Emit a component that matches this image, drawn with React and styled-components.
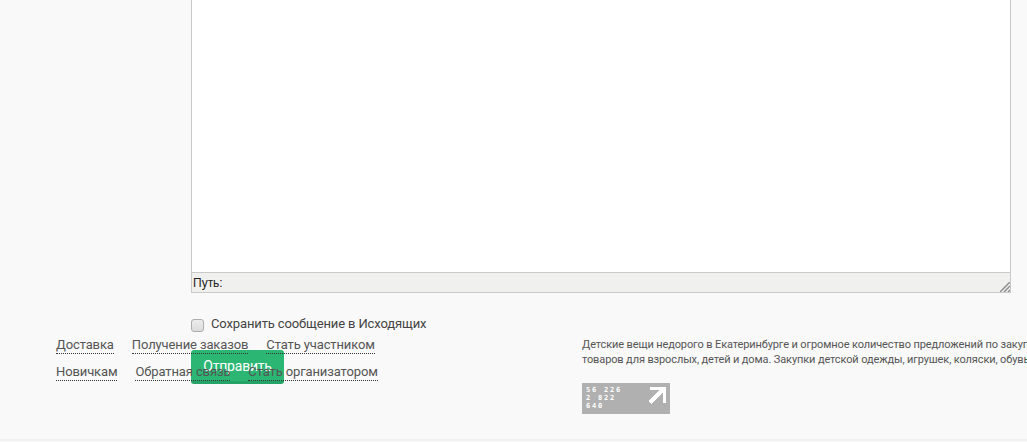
import React from 'react';
import styled, { createGlobalStyle } from 'styled-components';

const GlobalStyle = createGlobalStyle`
  html, body {
    margin: 0;
    padding: 0;
    height: 442px;
    overflow: hidden;
    background: #f9f9f9;
    font-family: Roboto, "Liberation Sans", sans-serif;
  }
`;

const Page = styled.div`
  width: 1027px;
  height: 439px;
  overflow: hidden;
  border-bottom: 2px solid #f1f1f1;
`;

const MessageForm = styled.form`
  display: flex;
  flex-direction: column;
  align-items: flex-start;
  padding-left: 191px;
`;

const Editor = styled.div`
  width: 820px;
  height: 293px;
  box-sizing: border-box;
  display: flex;
  flex-direction: column;
  border: 1px solid #c9c9c9;
  border-top: none;
  background: #fff;
`;

const EditorBody = styled.div`
  flex: 1;
`;

const StatusBar = styled.div`
  height: 19px;
  display: flex;
  align-items: center;
  justify-content: space-between;
  padding-left: 1px;
  border-top: 1px solid #c9c9c9;
  background: #f0f0ee;
  font-family: "Liberation Sans", Arial, sans-serif;
  font-size: 12px;
  color: #222;
`;

const ResizeGrip = styled.svg`
  width: 10px;
  height: 10px;
  align-self: flex-end;
  display: block;
`;

const SaveRow = styled.label`
  display: flex;
  align-items: center;
  gap: 7px;
  margin-top: 23px;
  height: 15px;
  font-size: 13px;
  letter-spacing: -0.13px;
  color: #444;
`;

const SaveCheck = styled.input`
  appearance: none;
  width: 13px;
  height: 13px;
  margin: 3px 0 0;
  border: 1px solid #adadad;
  border-radius: 3px;
  background: linear-gradient(#ececec, #dcdcdc);
`;

const SendButton = styled.button`
  width: 93px;
  height: 34px;
  margin-top: 19px;
  padding: 0;
  border: none;
  border-bottom: 3px solid #25a266;
  border-radius: 3px;
  background: #2bb673;
  color: #fff;
  font-family: Roboto, sans-serif;
  font-size: 14px;
  letter-spacing: -0.2px;
`;

const Footer = styled.footer`
  position: relative;
  display: flex;
  margin-top: -48px;
  padding-left: 56px;
`;

const FooterLinks = styled.nav`
  width: 526px;
  display: flex;
  flex-direction: column;
  gap: 9px;
`;

const LinkRow = styled.div`
  display: flex;
  gap: 18px;
`;

const FooterLink = styled.a`
  font-size: 13px;
  line-height: 17px;
  letter-spacing: -0.12px;
  color: #555;
  border-bottom: 1px dotted #333;
`;

const About = styled.div`
  flex: 1;
  min-width: 0;
  overflow: hidden;
`;

const AboutText = styled.p`
  margin: 1px 0 0;
  font-size: 11px;
  line-height: 15px;
  letter-spacing: -0.12px;
  color: #555;
  white-space: nowrap;
`;

const Counter = styled.div`
  width: 88px;
  height: 31px;
  margin-top: 16px;
  position: relative;
  background: #b0b0b0;
`;

const CounterDigits = styled.div`
  padding: 3px 0 0 4px;
  font-family: "DejaVu Sans Mono", monospace;
  font-size: 7px;
  font-weight: 700;
  line-height: 8px;
  letter-spacing: 1.8px;
  color: #fff;
  white-space: pre;
`;

const CounterArrow = styled.svg`
  position: absolute;
  right: 4px;
  top: 4px;
  width: 18px;
  height: 18px;
`;

export default function App() {
  return (
    <>
      <GlobalStyle />
      <Page>
        <MessageForm onSubmit={(e) => e.preventDefault()}>
          <Editor>
            <EditorBody />
            <StatusBar>
              <span>Путь:</span>
              <ResizeGrip viewBox="0 0 10 10">
                <path d="M0 10 L10 0 M4 10 L10 4 M8 10 L10 8" stroke="#8f8f8f" strokeWidth="1.5" fill="none" />
              </ResizeGrip>
            </StatusBar>
          </Editor>
          <SaveRow>
            <SaveCheck type="checkbox" />
            Сохранить сообщение в Исходящих
          </SaveRow>
          <SendButton type="submit">Отправить</SendButton>
        </MessageForm>
        <Footer>
          <FooterLinks>
            <LinkRow>
              <FooterLink>Доставка</FooterLink>
              <FooterLink>Получение заказов</FooterLink>
              <FooterLink>Стать участником</FooterLink>
            </LinkRow>
            <LinkRow>
              <FooterLink>Новичкам</FooterLink>
              <FooterLink>Обратная связь</FooterLink>
              <FooterLink>Стать организатором</FooterLink>
            </LinkRow>
          </FooterLinks>
          <About>
            <AboutText>
              Детские вещи недорого в Екатеринбурге и огромное количество предложений по закупкам
              <br />
              товаров для взрослых, детей и дома. Закупки детской одежды, игрушек, коляски, обувь
            </AboutText>
            <Counter>
              <CounterDigits>{'56 226\n2 822\n640'}</CounterDigits>
              <CounterArrow viewBox="0 0 18 18">
                <path d="M2 0 H18 V16 H15 V5 L3 17 L0 14 L12 3 H2 Z" fill="#fff" shapeRendering="crispEdges" />
              </CounterArrow>
            </Counter>
          </About>
        </Footer>
      </Page>
    </>
  );
}
